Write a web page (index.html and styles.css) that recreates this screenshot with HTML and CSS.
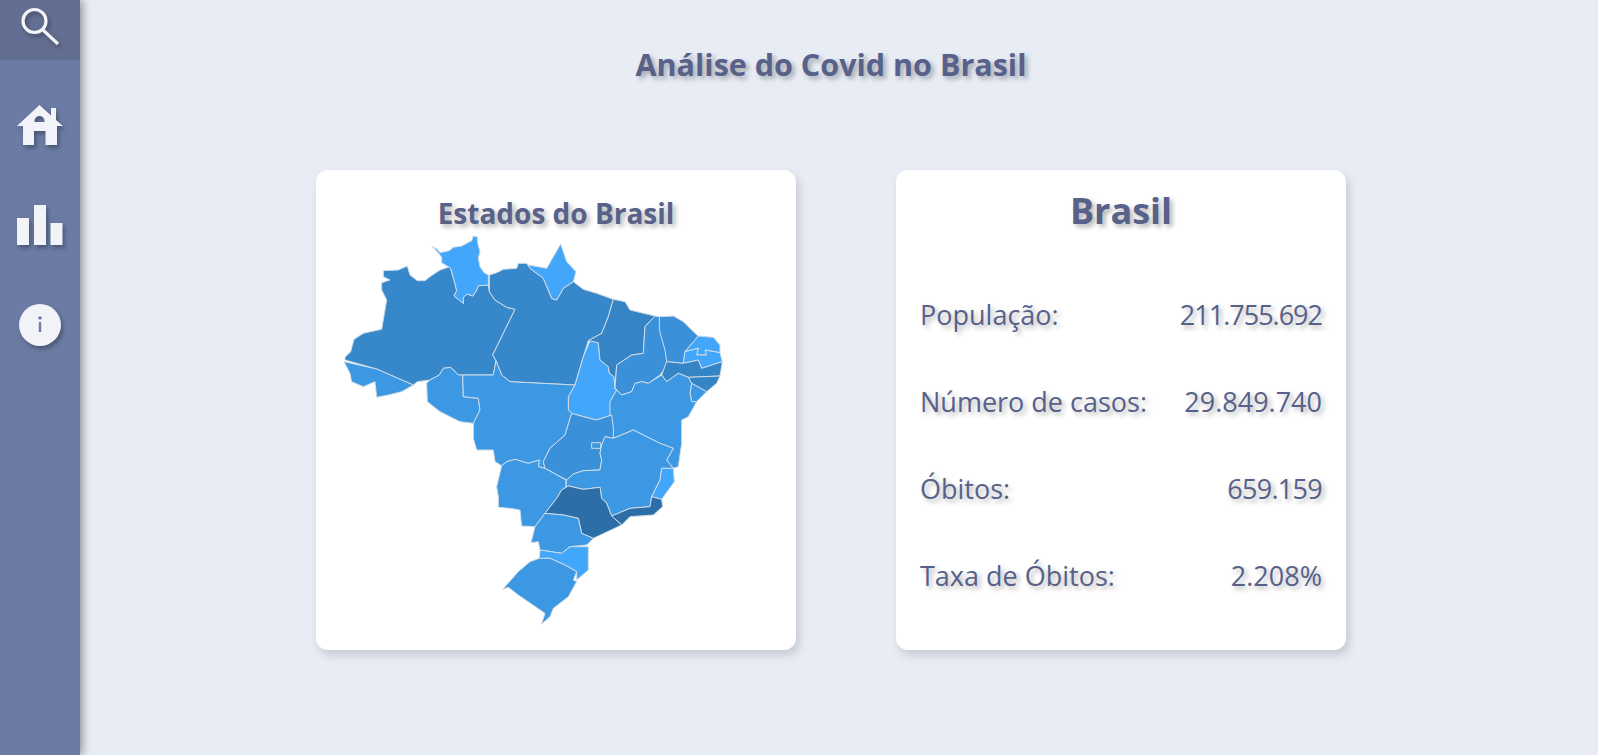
FILE: index.html
```html
<!DOCTYPE html>
<html lang="pt-BR">
<head>
  <meta charset="UTF-8" />
  <title>Análise do Covid no Brasil</title>
  <link rel="stylesheet" href="styles.css">
</head>
<body>

  <nav class="sidebar">
    <div class="search-btn">
      <svg class="icon" viewBox="0 0 80 60">
        <circle class="search-ring" cx="34.500" cy="21" r="11.500" />
        <path class="search-handle" d="M43 30 L58 44" />
      </svg>
    </div>
    <ul class="menu">
      <li>
        <svg class="icon" viewBox="0 10 80 100">
          <path class="solid" fill-rule="evenodd" d="M17 76 L39.5 55 L51 65.500 V58 H56 V70 L63 76 H57 V95 H45.500 V81 H34 V95 H23 V76 Z M34.500 71 A5 5 0 0 1 44.500 71 V72 H34.500 Z" />
        </svg>
      </li>
      <li>
        <svg class="icon" viewBox="0 10 80 100">
          <rect class="solid" x="17" y="68" width="12" height="27" />
          <rect class="solid" x="34" y="55" width="12" height="40" />
          <rect class="solid" x="50.500" y="73" width="12" height="22" />
        </svg>
      </li>
      <li>
        <svg class="icon" viewBox="0 10 80 100">
          <circle class="solid" cx="40" cy="75" r="21" />
          <circle class="dot" cx="40" cy="68" r="1.800" />
          <rect class="dot" x="38.800" y="72" width="2.400" height="10" />
        </svg>
      </li>
    </ul>
  </nav>

  <main class="content">
    <h1 class="page-title">Análise do Covid no Brasil</h1>

    <div class="cards">
      <section class="card map-card">
        <h2 class="map-title">Estados do Brasil</h2>
        <svg class="map" viewBox="0 0 1230 1230">
          <!-- Norte -->
          <polygon class="uf lvl-2" points="160,152 205,150 232,138 240,165 262,182 285,182 300,170 330,150 360,140 372,180 380,212 372,228 385,238 400,250 400,232 412,222 428,228 438,215 445,197 475,195 478,215 495,240 530,262 555,268 488,405 498,422 490,465 398,465 385,465 362,442 340,445 328,465 300,480 262,485 250,495 140,447 45,420 45,412 62,395 72,358 100,340 135,332 155,328 170,240 155,210 155,188 180,180 160,170" />
          <polygon class="uf lvl-1" points="42,425 140,447 250,495 215,515 175,525 140,532 135,485 100,500 65,485 60,460" />
          <polygon class="uf lvl-1" points="290,490 300,480 328,465 340,445 362,442 385,465 398,465 400,530 445,535 450,570 430,610 390,605 330,575 292,545" />
          <polygon class="uf lvl-0" points="305,78 322,88 330,98 358,92 370,82 395,78 425,62 430,48 442,50 443,68 450,95 445,115 450,140 462,158 475,165 475,195 445,197 438,215 428,228 412,222 400,232 400,250 385,238 372,228 380,212 372,180 362,145 335,128 335,112 322,95" />
          <polygon class="uf lvl-2" points="478,165 500,158 520,148 560,145 565,130 590,130 600,145 640,175 665,235 680,240 700,205 730,185 760,208 800,220 850,238 835,290 815,340 775,362 760,410 735,495 540,485 515,465 498,422 488,405 555,268 530,262 495,240 478,215" />
          <polygon class="uf lvl-0" points="595,135 650,145 692,72 710,125 738,155 730,185 700,205 680,240 665,235 640,175 600,145" />
          <polygon class="uf lvl-0" points="780,362 805,368 810,420 835,440 838,460 852,470 855,505 860,510 840,545 845,585 800,600 760,590 725,580 715,570 715,530 735,495 760,410" />
          <!-- Nordeste -->
          <polygon class="uf lvl-3" points="850,238 885,245 900,270 975,288 945,320 940,400 905,405 860,435 855,505 852,470 838,460 835,440 810,420 805,368 775,362 815,340 835,290" />
          <polygon class="uf lvl-2b" points="975,288 988,290 1000,350 1015,420 1005,445 990,465 955,490 935,485 915,490 905,515 875,525 855,505 860,435 905,405 940,400 945,320" />
          <polygon class="uf lvl-2b" points="988,290 1030,288 1060,305 1095,340 1105,348 1065,395 1060,430 1010,425 1005,390 988,330" />
          <polygon class="uf lvl-0" points="1105,348 1150,352 1170,375 1170,398 1125,390 1130,405 1100,405 1105,385 1065,395" />
          <polygon class="uf lvl-0" points="1065,395 1105,385 1100,405 1130,405 1125,390 1170,398 1177,425 1115,445 1105,420 1060,430" />
          <polygon class="uf lvl-3" points="1010,425 1060,430 1105,420 1115,445 1177,425 1170,468 1075,472 1045,460 1010,485 995,465" />
          <polygon class="uf lvl-3" points="1075,472 1170,468 1160,490 1130,515 1085,490" />
          <polygon class="uf lvl-1" points="1085,490 1130,515 1100,545 1085,545 1080,520" />
          <polygon class="uf lvl-1" points="855,505 875,525 905,515 915,490 935,485 955,490 995,465 1010,485 1045,460 1075,472 1085,490 1080,520 1085,545 1100,545 1075,590 1055,600 1055,670 1045,740 1030,745 1010,720 1030,685 990,670 910,630 850,655 850,625 840,580 840,545 860,510" />
          <!-- Centro-Oeste -->
          <polygon class="uf lvl-1" points="398,465 490,465 498,422 515,465 540,485 735,495 715,530 715,570 725,580 705,645 660,685 640,725 645,745 625,740 628,720 595,730 555,718 530,725 515,737 495,725 490,690 440,690 430,655 430,610 450,570 445,535 400,530" />
          <polygon class="uf lvl-2b" points="725,580 760,590 800,600 845,585 850,625 850,655 825,650 815,675 810,700 815,720 810,750 760,752 730,762 710,780 645,745 640,725 660,685 705,645" />
          <rect class="uf lvl-1" x="785" y="668" width="27" height="17" />
          <polygon class="uf lvl-1" points="515,737 530,725 555,718 595,730 628,720 625,740 645,745 708,780 708,802 695,810 680,835 645,880 615,920 575,918 570,870 540,865 505,862 505,830 500,800" />
          <!-- Sudeste -->
          <polygon class="uf lvl-1" points="850,655 910,630 990,670 1030,685 1010,720 1030,745 995,745 990,780 975,810 965,830 960,860 900,865 845,888 830,850 815,835 810,802 760,808 715,798 708,802 710,780 730,762 760,752 810,750 815,720 810,700 815,675 825,650" />
          <polygon class="uf lvl-0" points="995,745 1030,745 1033,785 995,838 965,830 975,810 990,780" />
          <polygon class="uf lvl-4" points="965,830 995,838 998,860 970,885 900,890 875,915 845,888 900,865 960,860" />
          <polygon class="uf lvl-4" points="715,798 760,808 810,802 815,835 830,850 845,888 875,915 790,955 755,940 745,895 700,885 645,880 680,835 695,810" />
          <!-- Sul -->
          <polygon class="uf lvl-1" points="645,880 700,885 745,895 755,940 790,955 770,975 720,980 695,1000 630,990 625,965 603,968 615,920" />
          <polygon class="uf lvl-0" points="630,990 695,1000 720,980 775,980 775,1050 740,1080 740,1055 705,1035 660,1015 628,1015" />
          <polygon class="uf lvl-1" points="628,1015 660,1015 705,1035 740,1055 730,1080 740,1085 715,1130 670,1165 660,1190 635,1212 645,1180 565,1125 535,1102 518,1108 565,1055 600,1025" />
        </svg>
      </section>

      <section class="card info-card">
        <h2 class="info-title">Brasil</h2>
        <div class="info-row"><span>População:</span><span class="tight">211.755.692</span></div>
        <div class="info-row"><span>Número de casos:</span><span>29.849.740</span></div>
        <div class="info-row"><span>Óbitos:</span><span class="tight-sm">659.159</span></div>
        <div class="info-row"><span>Taxa de Óbitos:</span><span>2.208%</span></div>
      </section>
    </div>
  </main>

</body>
</html>
```

FILE: styles.css
```css
* {
  box-sizing: border-box;
}
body {
  margin: 0;
  height: 755px;
  overflow: hidden;
  display: flex;
  font-family: "Open Sans", "Noto Sans", Arial, sans-serif;
  background: #e7ecf5;
  color: #57618a;
}
.sidebar {
  width: 80px;
  flex: none;
  background: #6b7ba4;
  box-shadow: 3px 0 8px rgba(0,0,0,0.35);
}
.search-btn {
  height: 60px;
  background: #636f92;
}
.icon {
  display: block;
  width: 80px;
  height: 100%;
  filter: drop-shadow(2px 3px 2px rgba(0,0,0,0.3));
}
.search-ring {
  fill: none;
  stroke: #f3f4f8;
  stroke-width: 3.2;
}
.search-handle {
  fill: none;
  stroke: #f3f4f8;
  stroke-width: 3.2;
}
.menu {
  list-style: none;
  margin: 0;
  padding: 0;
}
.menu li {
  height: 100px;
}
.solid {
  fill: #f2f3f8;
}
.dot {
  fill: #6b7ba4;
}
.content {
  flex: 1;
  padding: 0 16px 0 0;
  display: flex;
  flex-direction: column;
  align-items: center;
}
.page-title {
  margin: 42px 0 0 0;
  height: 128px;
  font-size: 30.500px;
  line-height: 44px;
  font-weight: 700;
  text-shadow: 3px 3px 5px rgba(0,0,0,0.3);
}
.cards {
  display: flex;
  gap: 100px;
}
.card {
  height: 480px;
  background: #fff;
  border-radius: 12px;
  box-shadow: 3px 5px 10px rgba(0,0,0,0.15);
}
.map-card {
  width: 480px;
  padding: 0 0 0 14px;
}
.map-title {
  margin: 0;
  padding: 23px 14px 0 0;
  height: 50px;
  font-size: 28px;
  line-height: 40px;
  font-weight: 700;
  text-align: center;
  text-shadow: 3px 3px 5px rgba(0,0,0,0.3);
}
.map {
  display: block;
  width: 410px;
  height: 410px;
}
.uf {
  stroke: #cfdce8;
  stroke-width: 3;
  stroke-linejoin: round;
}
.lvl-0 {
  fill: #42a6fb;
}
.lvl-1 {
  fill: #3c98e2;
}
.lvl-2 {
  fill: #3788cb;
}
.lvl-2b {
  fill: #3a90d9;
}
.lvl-3 {
  fill: #3584c5;
}
.lvl-4 {
  fill: #2c6ea8;
}
.info-card {
  width: 450px;
  padding: 0 24px;
}
.info-title {
  margin: 0;
  padding-top: 13px;
  height: 101px;
  font-size: 36px;
  line-height: 56px;
  font-weight: 700;
  text-align: center;
  text-shadow: 3px 3px 5px rgba(0,0,0,0.3);
}
.info-row {
  display: flex;
  justify-content: space-between;
  align-items: center;
  height: 87px;
  font-size: 27px;
  font-weight: 500;
  text-shadow: 3px 3px 5px rgba(0,0,0,0.3);
}
.tight {
  letter-spacing: -1px;
}
.tight-sm {
  letter-spacing: -0.7px;
}
```
